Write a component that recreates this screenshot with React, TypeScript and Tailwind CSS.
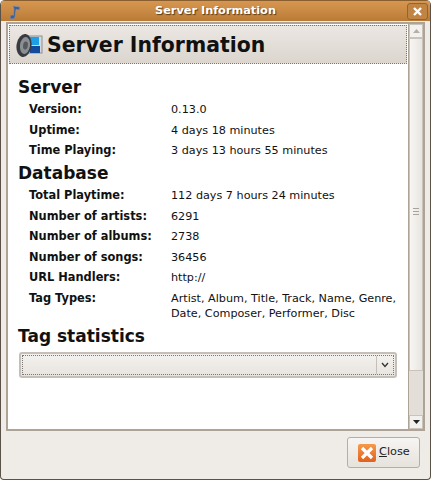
const sans = "font-['DejaVu_Sans',sans-serif]";

function Row({ label, value, h = "h-[20.5px]" }: { label: string; value: React.ReactNode; h?: string }) {
  return (
    <div className={`flex ${h} items-start`}>
      <div className="w-[153px] pl-[11px] text-[11.4px] leading-[15px] font-bold text-[#111]">{label}</div>
      <div className="flex-1 text-[11.2px] leading-[15px] text-[#111]">{value}</div>
    </div>
  );
}

function Section({ children }: { children: React.ReactNode }) {
  return <div className="text-[17px] leading-[22px] font-bold text-[#111]">{children}</div>;
}

export default function App() {
  return (
    <div className={`${sans} w-[431px] h-[480px] bg-[#efebe7] flex flex-col overflow-hidden rounded-t-[5px] border-x border-b border-[#5a5248] rounded-b-[4px]`}>
      <div className="h-[21px] shrink-0 flex items-center bg-gradient-to-b from-[#d8964f] via-[#c98a45] to-[#b97a36] border-t border-[#8a5f30] relative">
        <svg width="14" height="16" viewBox="0 0 14 16" className="absolute left-[7px] top-[3px]">
          <path d="M5 2 L12 3 L11.5 6 L8 5.5 L7 13 C6.5 15.5 2 15.5 2 13.2 C2 11.2 4.5 10.8 5.5 11.3 L6 5 Z" fill="#3f5f93" stroke="#8194ad" strokeWidth="0.7" />
        </svg>
        <div className="flex-1 text-center text-[11.3px] font-bold text-white [text-shadow:1px_1px_1px_#5a3a14]">Server Information</div>
        <div className="absolute right-[2px] top-[2px] w-[21px] h-[17px] border border-[#8f6534] rounded-[3px] flex items-center justify-center bg-[#c08444]">
          <svg width="11" height="11" viewBox="0 0 11 11"><path d="M2 2 L9 9 M9 2 L2 9" stroke="#fff" strokeWidth="2.4" /></svg>
        </div>
      </div>

      <div className="mx-[5px] mt-[1px] h-[409px] shrink-0 flex border-2 border-[#ada397] bg-white">
        <div className="flex-1 min-w-0 flex flex-col">
          <div className="mx-[1px] mt-[1px] h-[39px] shrink-0 border border-dotted border-[#777] bg-gradient-to-b from-[#ebe7e2] to-[#dbd5ce] flex items-center pl-[5px] gap-[4px]">
            <svg width="28" height="26" viewBox="0 0 28 26">
              <rect x="12" y="4" width="15" height="17" fill="#d5d8dc" stroke="#8a8f95" />
              <rect x="15" y="5" width="9" height="8" fill="#1f9fe6" />
              <rect x="15" y="14" width="10" height="7" fill="#124a9c" />
              <ellipse cx="9" cy="13.5" rx="7.5" ry="11.5" transform="rotate(8 9 13.5)" fill="#3a3b40" />
              <ellipse cx="10" cy="13.5" rx="5" ry="8.5" transform="rotate(8 10 13.5)" fill="#8a8f93" />
              <ellipse cx="10.5" cy="13.5" rx="2.4" ry="4" transform="rotate(8 10.5 13.5)" fill="#565a5e" />
            </svg>
            <span className="text-[20.4px] leading-[26px] font-bold text-[#111]">Server Information</span>
          </div>
          <div className="pl-[10px] pr-[10px] pt-[12px] flex-1">
            <Section>Server</Section>
            <div className="mt-[4px]">
              <Row label="Version:" value="0.13.0" />
              <Row label="Uptime:" value="4 days 18 minutes" />
              <Row label="Time Playing:" value="3 days 13 hours 55 minutes" h="h-[19px]" />
            </div>
            <Section>Database</Section>
            <div className="mt-[4.4px]">
              <Row label="Total Playtime:" value="112 days 7 hours 24 minutes" />
              <Row label="Number of artists:" value="6291" />
              <Row label="Number of albums:" value="2738" />
              <Row label="Number of songs:" value="36456" />
              <Row label="URL Handlers:" value="http://" />
              <Row label="Tag Types:" value="Artist, Album, Title, Track, Name, Genre, Date, Composer, Performer, Disc" h="h-[31px]" />
            </div>
            <div className="mt-[3px]"><Section>Tag statistics</Section></div>
            <div className="mx-[1px] mt-[5px] h-[26px] border-2 border-[#c5bfb7] rounded-[3px] bg-gradient-to-b from-[#f4f2ef] to-[#e8e4df] flex p-[1px]">
              <div className="flex-1 border border-dotted border-[#777] flex">
                <div className="flex-1" />
                <div className="w-[17px] border-l border-[#c5bfb7] flex items-center justify-center">
                  <svg width="8" height="6" viewBox="0 0 8 6"><path d="M1 1 L4 4.5 L7 1" fill="none" stroke="#333" strokeWidth="1.3" /></svg>
                </div>
              </div>
            </div>
          </div>
        </div>
        <div className="w-[15px] shrink-0 bg-[#e3ded8] border-l border-[#ada397] flex flex-col">
          <div className="h-[14px] bg-[#f3f1ee] border border-[#c9c3bb] flex items-center justify-center">
            <svg width="7" height="4" viewBox="0 0 7 4"><path d="M0 4 L3.5 0 L7 4 Z" fill="#b5afa7" /></svg>
          </div>
          <div className="h-[333px] bg-gradient-to-r from-[#f7f5f3] to-[#e9e5e0] border border-[#c9c3bb] flex flex-col items-center justify-center gap-[2px] pt-[14px]">
            <div className="w-[6px] h-[1px] bg-[#a9a39b]" />
            <div className="w-[6px] h-[1px] bg-[#a9a39b]" />
            <div className="w-[6px] h-[1px] bg-[#a9a39b]" />
          </div>
          <div className="flex-1" />
          <div className="h-[14px] bg-[#f3f1ee] border border-[#c9c3bb] flex items-center justify-center">
            <svg width="7" height="4" viewBox="0 0 7 4"><path d="M0 0 L3.5 4 L7 0 Z" fill="#222" /></svg>
          </div>
        </div>
      </div>

      <div className="flex-1 flex justify-end items-start pt-[6px] pr-[10px]">
        <div className="w-[73px] h-[31px] border border-[#b5aea5] rounded-[3px] bg-gradient-to-b from-[#f7f5f3] to-[#e6e2dc] flex items-center pl-[10px] gap-[3px]">
          <div className="w-[18px] h-[18px] rounded-[2px] bg-gradient-to-b from-[#f59a4a] to-[#e2601a] flex items-center justify-center">
            <svg width="14" height="14" viewBox="0 0 14 14"><path d="M2 2 L12 12 M12 2 L2 12" stroke="#fff" strokeWidth="3.2" /></svg>
          </div>
          <span className="text-[11.3px] text-[#222]"><span className="underline">C</span>lose</span>
        </div>
      </div>
    </div>
  );
}
